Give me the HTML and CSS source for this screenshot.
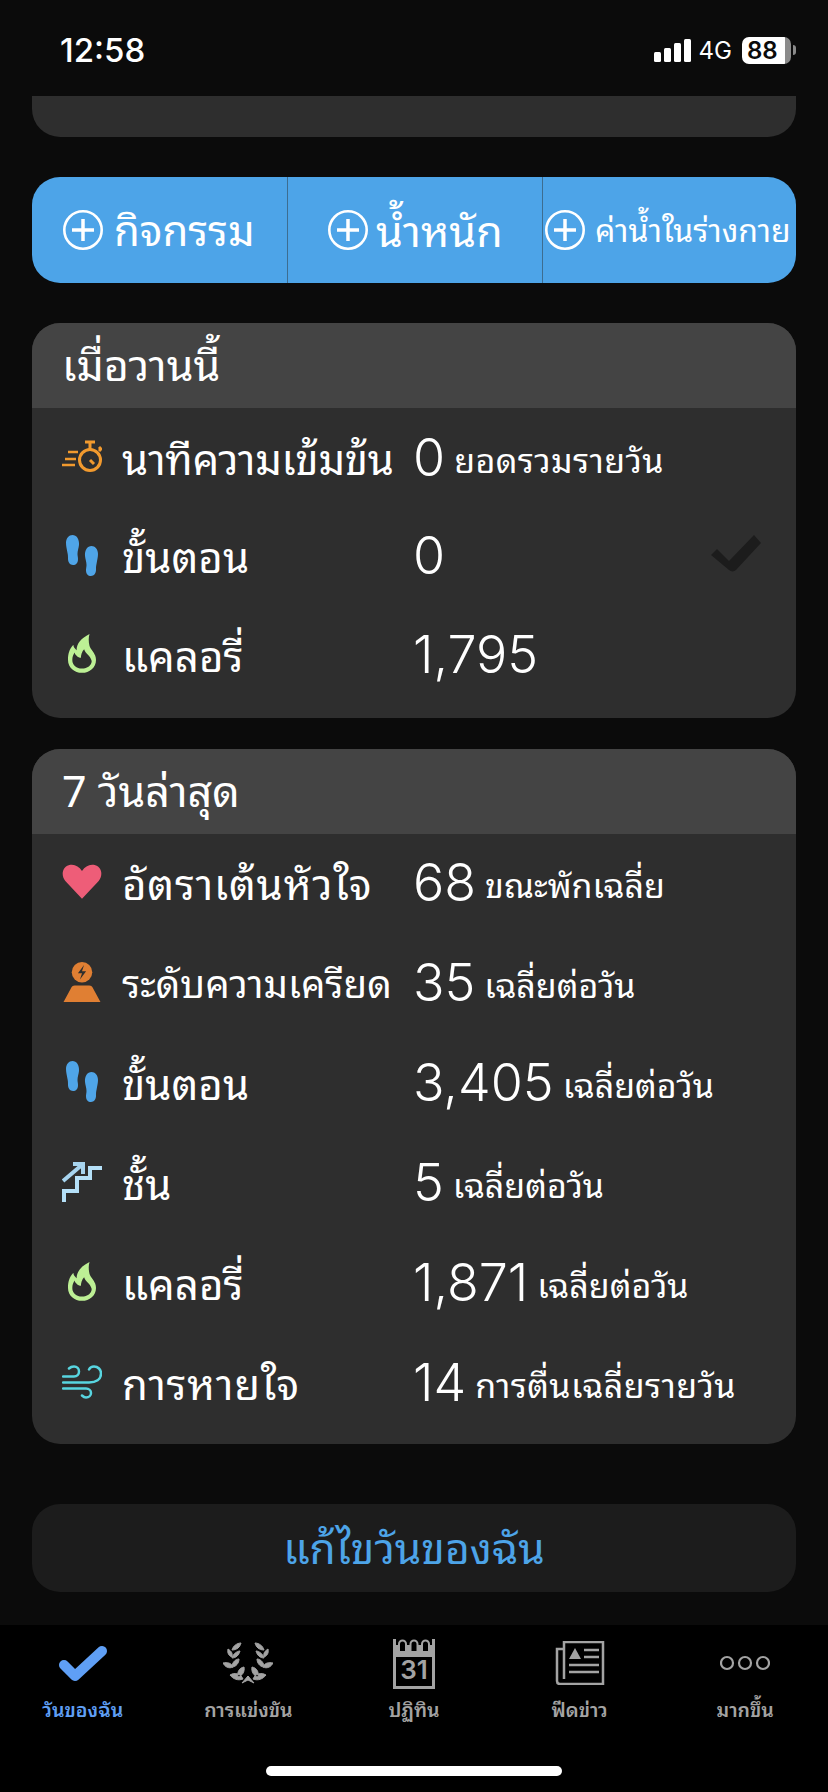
FILE: index.html

```html
<!DOCTYPE html>
<html lang="th">
<head>
  <meta charset="UTF-8" />
  <meta name="viewport" content="width=device-width, initial-scale=1.0" />
  <title>วันของฉัน</title>
  <link rel="stylesheet" href="styles.css">
</head>
<body>
  <svg class="defs" width="0" height="0">
    <symbol id="feet" viewBox="0 0 32 42">
      <path d="M6.500 0C10.500 0 13.500 4 13 10c-.3 3-1.500 6-1.500 9 0 2 .5 3 .5 5 0 4-2 6-5 6s-5-3-5-6c0-3 0-4-.7-7C.8 14 0 11 0 8 0 3 3 0 6.500 0z" fill="#4fa5e8"/>
      <path transform="translate(32 11) scale(-1 1)" d="M6.500 0C10.500 0 13.500 4 13 10c-.3 3-1.500 6-1.500 9 0 2 .5 3 .5 5 0 4-2 6-5 6s-5-3-5-6c0-3 0-4-.7-7C.8 14 0 11 0 8 0 3 3 0 6.500 0z" fill="#4fa5e8"/>
    </symbol>
    <symbol id="flame" viewBox="0 0 26 37">
      <path fill="#bdf095" fill-rule="evenodd" d="M20 0C12 4 8 9 8 15 6 13 5 12 5 10 1 14 0 19 0 24c0 7 6 12 13 12s13-5 13-12c0-6-4-8-6-13-1-4-1-8 0-11zM15 14c1 4 6 6 7 11 0 4-4 7-9 7s-9-3-9-8c0-3 1-5 2-7 1 3 4 5 6 5 0-3 1-6 3-8z"/>
    </symbol>
    <symbol id="laurel-side" viewBox="0 0 50 42">
      <path d="M9 8c1-4 5-7 9-7-1 4-4 7-9 7zM5 7c3 2 5 4 4 8-3-1-5-4-4-8zM17 9c-3 0-7 3-8 7 4 0 7-3 8-7zM0 21c4-1 9 0 10 4-4 2-8 0-10-4zM16 17c-4 0-7 4-7 8 4 0 7-4 7-8zM7 33c5-3 11-1 13 4-5 2-10 0-13-4zM21 25c-5 1-7 5-6 10 4-1 7-5 6-10zM25 34l-6 7 6-3z" fill="#a3a3a3" stroke="#a3a3a3" stroke-width="1"/>
    </symbol>
  </svg>

  <header class="status-bar">
    <span class="clock">12:58</span>
    <div class="status-right">
      <span class="signal"><i></i><i></i><i></i><i></i></span>
      <span class="network">4G</span>
      <span class="battery"><span class="battery-level">88</span></span>
      <span class="battery-tip"></span>
    </div>
  </header>

  <main class="content">
    <div class="card-end"></div>

    <div class="quick-add">
      <button class="add-btn add-activity">
        <svg class="plus" viewBox="0 0 40 40"><circle cx="20" cy="20" r="18.700" fill="none" stroke="#fff" stroke-width="2.600"/><path d="M20 9v22M9 20h22" stroke="#fff" stroke-width="3.500"/></svg>
        <span>กิจกรรม</span>
      </button>
      <button class="add-btn add-weight">
        <svg class="plus" viewBox="0 0 40 40"><circle cx="20" cy="20" r="18.700" fill="none" stroke="#fff" stroke-width="2.600"/><path d="M20 9v22M9 20h22" stroke="#fff" stroke-width="3.500"/></svg>
        <span>น้ำหนัก</span>
      </button>
      <button class="add-btn add-hydration">
        <svg class="plus" viewBox="0 0 40 40"><circle cx="20" cy="20" r="18.700" fill="none" stroke="#fff" stroke-width="2.600"/><path d="M20 9v22M9 20h22" stroke="#fff" stroke-width="3.500"/></svg>
        <span>ค่าน้ำในร่างกาย</span>
      </button>
    </div>

    <section class="card card-yesterday">
      <h2 class="card-title">เมื่อวานนี้</h2>
      <div class="row">
        <svg class="icon" viewBox="0 0 40 34"><g fill="none" stroke="#f29a2e" stroke-width="3"><circle cx="28" cy="20" r="10.500"/><path d="M28 2v7M23 2h10M37 7l2 2-2 2M28 20l4 4"/><path stroke-width="2.500" d="M6 12h10M3 19h11M0 25h13"/></g></svg>
        <span class="label label-narrow">นาทีความเข้มข้น</span>
        <span class="value">0</span><span class="note note-wide">ยอดรวมรายวัน</span>
      </div>
      <div class="row">
        <svg class="icon icon-feet"><use href="#feet"/></svg>
        <span class="label">ขั้นตอน</span>
        <span class="value">0</span>
        <svg class="goal-check" viewBox="0 0 54 42"><path d="M1 22l6-6 12 12L44 2l7 8-25 27a5 5 0 0 1-7 0z" fill="#1c1c1c"/></svg>
      </div>
      <div class="row">
        <svg class="icon icon-flame"><use href="#flame"/></svg>
        <span class="label">แคลอรี่</span>
        <span class="value">1,795</span>
      </div>
    </section>

    <section class="card card-week">
      <h2 class="card-title">7 วันล่าสุด</h2>
      <div class="row">
        <svg class="icon" viewBox="0 0 36 32"><path d="M18 31L3 15C-1 10 0 3 6 1c5-1.500 9 1 12 5 3-4 7-6.500 12-5 6 2 7 9 3 14z" fill="#ee5d78"/></svg>
        <span class="label label-wide">อัตราเต้นหัวใจ</span>
        <span class="value">68</span><span class="note">ขณะพักเฉลี่ย</span>
      </div>
      <div class="row">
        <svg class="icon" viewBox="0 0 36 39"><circle cx="18" cy="10" r="10" fill="#e07f33"/><path d="M20 3l-6 8h4l-2 6 6-8h-4z" fill="#2e2e2e"/><path d="M11 23h14c2 0 3 1 4 3l7 13H0l7-13c1-2 2-3 4-3z" fill="#e07f33"/></svg>
        <span class="label label-tight">ระดับความเครียด</span>
        <span class="value">35</span><span class="note">เฉลี่ยต่อวัน</span>
      </div>
      <div class="row">
        <svg class="icon icon-feet"><use href="#feet"/></svg>
        <span class="label">ขั้นตอน</span>
        <span class="value">3,405</span><span class="note">เฉลี่ยต่อวัน</span>
      </div>
      <div class="row">
        <svg class="icon" viewBox="0 0 40 40"><path d="M2 40V29h13V16h13V6h12" fill="none" stroke="#b5e0f8" stroke-width="4"/><path d="M1 19L21 2M11 2h10v10" fill="none" stroke="#a7d4ef" stroke-width="4"/></svg>
        <span class="label">ชั้น</span>
        <span class="value">5</span><span class="note">เฉลี่ยต่อวัน</span>
      </div>
      <div class="row">
        <svg class="icon icon-flame"><use href="#flame"/></svg>
        <span class="label">แคลอรี่</span>
        <span class="value">1,871</span><span class="note">เฉลี่ยต่อวัน</span>
      </div>
      <div class="row">
        <svg class="icon" viewBox="0 0 40 33"><g fill="none" stroke="#58d5e0" stroke-width="2.500" stroke-linecap="round"><path d="M1 11h11c3 0 5-2 5-5s-2-5-5-5c-2 0-4 1-5 2"/><path d="M1 17h26c7 0 12-3 12-9 0-4-3-7-7-7-2 0-4 1-5 3"/><path d="M1 23h23c3 0 5 2 5 4.500S27 32 24 32c-2 0-3-1-4-2"/></g></svg>
        <span class="label label-wide">การหายใจ</span>
        <span class="value">14</span><span class="note note-wide">การตื่นเฉลี่ยรายวัน</span>
      </div>
    </section>

    <button class="edit-btn">แก้ไขวันของฉัน</button>
  </main>

  <nav class="tabbar">
    <a class="tab active">
      <svg class="tab-icon" viewBox="0 0 50 44"><path d="M6 24l11 11L44 10" fill="none" stroke="#5f9ff5" stroke-width="10" stroke-linejoin="round" stroke-linecap="round"/></svg>
      <span>วันของฉัน</span>
    </a>
    <a class="tab">
      <svg class="tab-icon" viewBox="0 0 50 42"><use href="#laurel-side"/><use href="#laurel-side" transform="translate(50 0) scale(-1 1)"/></svg>
      <span>การแข่งขัน</span>
    </a>
    <a class="tab">
      <div class="calendar">
        <svg class="calendar-top" viewBox="0 0 42 18"><rect y="6" width="42" height="12" fill="#a3a3a3"/><g fill="#000" stroke="#a3a3a3" stroke-width="2"><path d="M6 13V5a3.500 3.500 0 0 1 7 0v8z"/><path d="M17.500 13V5a3.500 3.500 0 0 1 7 0v8z"/><path d="M29 13V5a3.500 3.500 0 0 1 7 0v8z"/></g></svg>
        <span class="calendar-day">31</span>
      </div>
      <span>ปฏิทิน</span>
    </a>
    <a class="tab">
      <svg class="tab-icon" viewBox="0 0 50 44"><g fill="none" stroke="#a3a3a3" stroke-width="2.500"><path d="M9 8H2v32c0 2 1 3 3 3h43V1H9v37"/><path d="M14 24h30M14 31h30M29 9h15M29 16h15"/></g><path d="M14 18l6-11 6 11z" fill="#a3a3a3"/></svg>
      <span>ฟีดข่าว</span>
    </a>
    <a class="tab">
      <svg class="tab-icon" viewBox="0 0 50 44"><g fill="none" stroke="#a3a3a3" stroke-width="2.200"><circle cx="7" cy="22" r="6"/><circle cx="25" cy="22" r="6"/><circle cx="43" cy="22" r="6"/></g></svg>
      <span>มากขึ้น</span>
    </a>
  </nav>
  <div class="home-area"><div class="home-bar"></div></div>
</body>
</html>
```

FILE: styles.css

```css
* {
  box-sizing: border-box;
}
body {
  margin: 0;
  width: 828px;
  height: 1792px;
  overflow: hidden;
  background-color: #0b0b0b;
  color: #fff;
  font-family: "Noto Sans Thai Looped", "Noto Sans Thai", "Inter", "Noto Sans", "DejaVu Sans", sans-serif;
  display: flex;
  flex-direction: column;
}
.defs {
  display: block;
  height: 0;
}
.status-bar {
  height: 96px;
  padding: 30px 32px 0 60px;
  display: flex;
  justify-content: space-between;
  align-items: flex-start;
}
.clock {
  font-family: "Inter", sans-serif;
  font-size: 33px;
  line-height: 40px;
  font-weight: 500;
}
.status-right {
  display: flex;
  align-items: center;
  height: 40px;
}
.signal {
  display: flex;
  align-items: flex-end;
  gap: 3px;
  height: 24px;
  margin-right: 8px;
}
.signal i {
  width: 7px;
  background-color: #fff;
  border-radius: 1.500px;
}
.signal i:nth-child(1) { height: 10px; }
.signal i:nth-child(2) { height: 14px; }
.signal i:nth-child(3) { height: 19px; }
.signal i:nth-child(4) { height: 23px; }
.network {
  font-family: "Inter", sans-serif;
  font-size: 24px;
  margin-right: 10px;
}
.battery {
  width: 49px;
  height: 27px;
  border-radius: 7px;
  background: linear-gradient(to right, #fff 88%, #8a8a8a 88%);
  display: flex;
  align-items: center;
  padding-left: 5px;
}
.battery-level {
  font-family: "Inter", sans-serif;
  font-size: 24px;
  font-weight: 600;
  color: #0b0b0b;
}
.battery-tip {
  width: 3px;
  height: 10px;
  margin-left: 2px;
  background-color: #8a8a8a;
  border-radius: 0 3px 3px 0;
}
.content {
  flex: 1;
  padding: 0 32px;
  display: flex;
  flex-direction: column;
}
.card-end {
  height: 41px;
  background-color: #2e2e2e;
  border-radius: 0 0 28px 28px;
}
.quick-add {
  margin-top: 40px;
  height: 106px;
  display: flex;
  background-color: #4da4e8;
  border-radius: 28px;
  overflow: hidden;
}
.add-btn {
  width: 255px;
  flex: none;
  border: none;
  border-right: 1px solid #3d6d90;
  background: none;
  color: #fff;
  font-family: inherit;
  font-size: 42px;
  display: flex;
  align-items: center;
  gap: 11px;
  padding: 0;
  white-space: nowrap;
}
.add-btn span {
  padding-bottom: 6px;
}
.add-activity {
  width: 256px;
  padding-left: 31px;
}
.add-weight {
  padding-left: 40px;
  font-size: 43px;
  gap: 8px;
}
.add-hydration {
  width: 253px;
  border-right: none;
  font-size: 32px;
  padding-left: 2px;
  gap: 10px;
}
.plus {
  width: 40px;
  height: 40px;
  flex: none;
}
.card {
  background-color: #2e2e2e;
  border-radius: 28px;
  overflow: hidden;
}
.card-yesterday {
  margin-top: 40px;
  height: 395px;
}
.card-week {
  margin-top: 31px;
  height: 695px;
}
.card-title {
  margin: 0;
  height: 85px;
  padding-left: 30px;
  background-color: #444;
  font-size: 43px;
  font-weight: 400;
  line-height: 78px;
}
.card-yesterday .row {
  height: 98.500px;
}
.card-week .card-title {
  margin-bottom: -2px;
}
.row {
  height: 100px;
  padding-left: 30px;
  display: flex;
  align-items: center;
  position: relative;
}
.icon {
  width: 40px;
  height: 40px;
  flex: none;
}
.icon-feet {
  width: 32px;
  height: 42px;
  margin: 0 4px;
}
.icon-flame {
  width: 28px;
  height: 40px;
  margin: 0 6px;
}
.label {
  width: 291px;
  margin-left: 20px;
  flex: none;
  font-size: 42px;
  padding-bottom: 3px;
  white-space: nowrap;
}
.label-narrow {
  letter-spacing: -0.300px;
}
.label-wide {
  letter-spacing: 0.800px;
}
.label-tight {
  font-size: 38.500px;
}
.value {
  font-family: "Inter", sans-serif;
  font-size: 52px;
  font-weight: 300;
}
.note {
  margin-left: 9px;
  font-size: 34px;
  white-space: nowrap;
}
.note-wide {
  letter-spacing: 0.400px;
}
.goal-check {
  position: absolute;
  right: 32px;
  top: 26px;
  width: 54px;
  height: 42px;
}
.edit-btn {
  margin-top: 60px;
  height: 88px;
  border: none;
  border-radius: 28px;
  background-color: #1c1c1c;
  color: #4da4e8;
  font-family: inherit;
  font-size: 42.500px;
  padding: 0 0 6px;
}
.tabbar {
  height: 167px;
  background-color: #000;
  display: grid;
  grid-template-columns: repeat(5, 1fr);
  padding-top: 14px;
}
.tab {
  display: flex;
  flex-direction: column;
  align-items: center;
  color: #a3a3a3;
  font-size: 19.500px;
  font-weight: 600;
}
.tab.active {
  color: #5f9ff5;
}
.tab-icon {
  width: 50px;
  height: 44px;
  margin: 2px 0 8px;
}
.calendar {
  width: 42px;
  height: 50px;
  margin-bottom: 4px;
  position: relative;
  border: 3px solid #a3a3a3;
  border-top: none;
  padding-top: 17px;
  text-align: center;
}
.calendar-top {
  position: absolute;
  left: -3px;
  top: 0;
  width: 42px;
  height: 18px;
}
.calendar-day {
  display: block;
  font-family: "Inter", sans-serif;
  font-size: 26px;
  font-weight: 600;
  line-height: 28px;
  color: #a3a3a3;
}
.home-area {
  height: 0;
  position: relative;
}
.home-bar {
  position: absolute;
  left: 266px;
  top: -26px;
  width: 296px;
  height: 10px;
  border-radius: 5px;
  background-color: #fff;
}
```
